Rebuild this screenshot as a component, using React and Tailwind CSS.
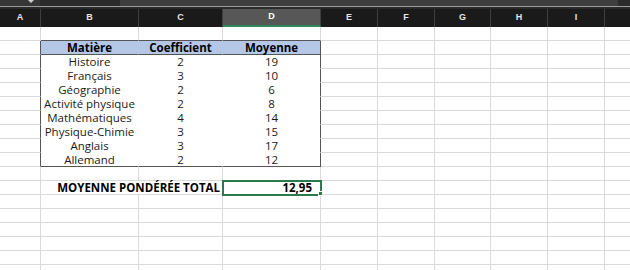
import React from "react";

const COLS = [
  { k: "A", w: "w-[41px]" },
  { k: "B", w: "w-[98px]" },
  { k: "C", w: "w-[84px]" },
  { k: "D", w: "w-[98px]" },
  { k: "E", w: "w-[57px]" },
  { k: "F", w: "w-[57px]" },
  { k: "G", w: "w-[56px]" },
  { k: "H", w: "w-[57px]" },
  { k: "I", w: "w-[57px]" },
];

const DATA = [
  ["Histoire", "2", "19"],
  ["Français", "3", "10"],
  ["Géographie", "2", "6"],
  ["Activité physique", "2", "8"],
  ["Mathématiques", "4", "14"],
  ["Physique-Chimie", "3", "15"],
  ["Anglais", "3", "17"],
  ["Allemand", "2", "12"],
];

const font = { fontFamily: '"Open Sans", "Liberation Sans", sans-serif' };

function Cell({ w, className = "", children }) {
  return (
    <div
      className={`${w} h-[14px] shrink-0 border-r border-b flex items-center justify-center text-[11.5px] leading-none whitespace-nowrap ${className}`}
    >
      {children}
    </div>
  );
}

function BlankTail() {
  return (
    <>
      <Cell w="w-[57px]" className="border-[#dadada]" />
      <Cell w="w-[57px]" className="border-[#dadada]" />
      <Cell w="w-[56px]" className="border-[#dadada]" />
      <Cell w="w-[57px]" className="border-[#dadada]" />
      <Cell w="w-[57px]" className="border-[#dadada]" />
      <div className="flex-1 h-[14px] border-b border-[#dadada]" />
    </>
  );
}

function BlankRow({ tableTop = false }) {
  const b = tableTop ? "border-r-[#dadada] border-b-[#555]" : "border-[#dadada]";
  return (
    <div className="flex">
      <Cell w="w-[41px]" className="border-[#dadada]" />
      <Cell w="w-[98px]" className={b} />
      <Cell w="w-[84px]" className={b} />
      <Cell w="w-[98px]" className={b} />
      <BlankTail />
    </div>
  );
}

function TableRow({ cells, header = false, last = false }) {
  const bg = header ? "bg-[#b5c7e6] font-bold text-black" : "bg-white text-[#1a1a1a]";
  const bb = header || last ? "border-b-[#555]" : "border-b-white";
  return (
    <div className="flex">
      <Cell w="w-[41px]" className="border-b-[#dadada] border-r-[#555]" />
      <Cell w="w-[98px]" className={`${bg} ${bb} ${header ? "border-r-[#b5c7e6]" : "border-r-white"}`}>
        {cells[0]}
      </Cell>
      <Cell w="w-[84px]" className={`${bg} ${bb} ${header ? "border-r-[#b5c7e6]" : "border-r-white"}`}>
        {cells[1]}
      </Cell>
      <Cell w="w-[98px]" className={`${bg} ${bb} border-r-[#555]`}>
        {cells[2]}
      </Cell>
      <BlankTail />
    </div>
  );
}

function TotalRow() {
  return (
    <div className="flex">
      <Cell w="w-[41px]" className="border-[#dadada]" />
      <div className="w-[182px] h-[14px] shrink-0 border-r border-b border-[#dadada] flex items-center justify-end pr-[2px] text-[11.5px] leading-none font-bold text-black whitespace-nowrap">
        MOYENNE PONDÉRÉE TOTAL
      </div>
      <div className="relative w-[98px] h-[14px] shrink-0 border-r border-b border-[#dadada] flex items-center justify-end pr-[8px] text-[11.5px] leading-none font-bold text-black">
        12,95
        <div className="absolute -left-[1px] -top-[1px] w-[100px] h-[16px] border-2 border-[#2a7a4e]" />
        <div className="absolute -right-[3px] -bottom-[2px] w-[5px] h-[5px] bg-[#2a7a4e] border border-white" />
      </div>
      <BlankTail />
    </div>
  );
}

export default function App() {
  return (
    <div className="w-[630px] h-[270px] overflow-hidden bg-white" style={font}>
      {/* top strip */}
      <div className="flex h-[6px] bg-[#2e2e2e]">
        <div className="w-[40px] bg-[#363636] flex items-start justify-end pr-[6px]">
          <div className="w-0 h-0 border-l-[3px] border-r-[3px] border-t-[3px] border-l-transparent border-r-transparent border-t-[#cfcfcf]" />
        </div>
        <div className="w-[80px] bg-[#2b2b2b]" />
        <div className="flex-1 bg-[#3d3d3d]" />
        <div className="w-[12px] bg-[#2b2b2b]" />
      </div>
      <div className="h-[1px] bg-[#9a9a9a]" />
      <div className="h-[2px] bg-[#2a2a2a]" />
      {/* column headers */}
      <div className="flex h-[18px] bg-[#1a1a1a]" style={{ fontFamily: '"Liberation Sans", Arial, sans-serif' }}>
        {COLS.map((c) => (
          <div
            key={c.k}
            className={`${c.w} shrink-0 h-full border-r border-[#3f3f3f] flex items-center justify-center text-[9px] font-bold ${
              c.k === "D" ? "bg-[#575757] border-b-2 border-b-[#2f8a58] text-white" : "text-[#e6e6e6]"
            }`}
          >
            {c.k}
          </div>
        ))}
        <div className="flex-1" />
      </div>
      <BlankRow tableTop />
      <TableRow cells={["Matière", "Coefficient", "Moyenne"]} header />
      {DATA.map((r, i) => (
        <TableRow key={r[0]} cells={r} last={i === DATA.length - 1} />
      ))}
      <BlankRow />
      <TotalRow />
      {[0, 1, 2, 3, 4, 5].map((i) => (
        <BlankRow key={i} />
      ))}
    </div>
  );
}
